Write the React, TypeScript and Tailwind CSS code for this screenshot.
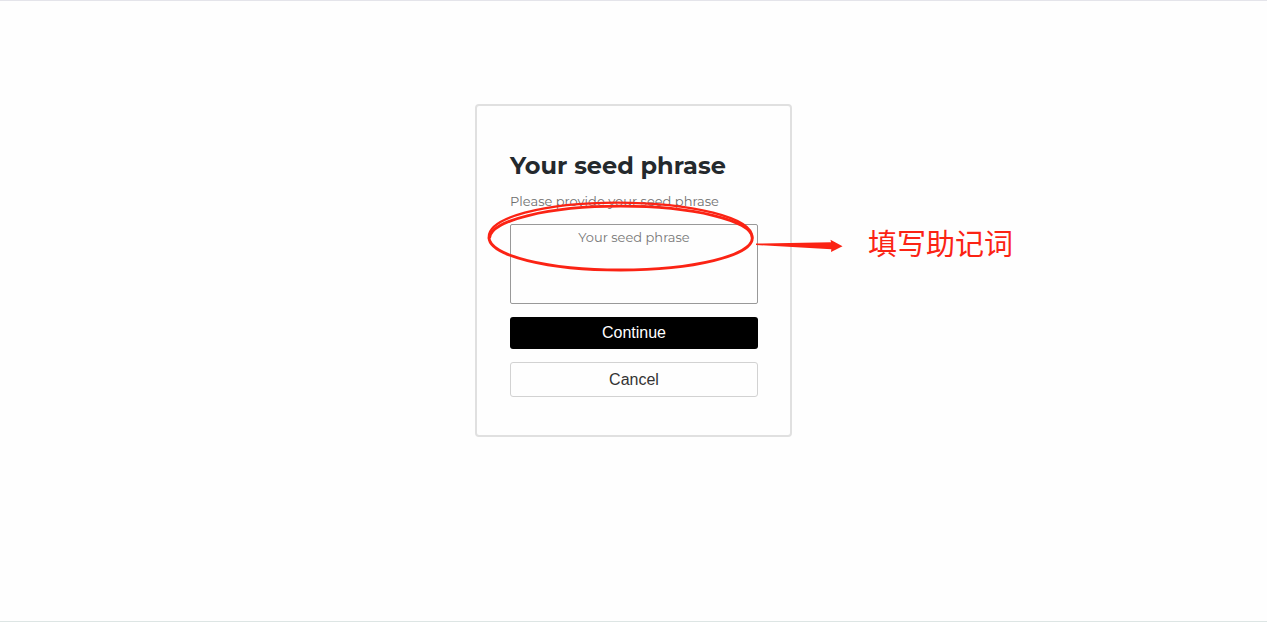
function Annotation() {
  return (
    <div className="pointer-events-none absolute top-[94px] left-[10px] flex items-start">
      <svg className="h-[76px] w-[360px] shrink-0" viewBox="485 198 360 76" fill="none" aria-hidden="true">
        <g stroke="#fb2314">
          <path
            d="M489 237.5 C489 255.6 548 270 620.5 270 C693 270 752.3 255.6 752.3 238 C752.3 220.5 693 206.2 620.5 206.2 C548 206.2 490.5 220.5 489.6 238"
            strokeWidth="2.8"
          />
          <path
            d="M489 238.5 C486 217.5 545 202.6 617 202.6 C690 202.6 755 217.5 752 238.5"
            strokeWidth="2.4"
          />
        </g>
        <path d="M756 243.6 L831 242.3 L830.5 239.8 L842.5 246.2 L831 252 L831.3 249.2 L756 245 Z" fill="#fb2314" />
      </svg>
      <span className="mt-[24px] ml-[23px] font-['Noto_Sans_CJK_SC',sans-serif] text-[29px] leading-[40px] whitespace-nowrap text-[#fb2314]">
        填写助记词
      </span>
    </div>
  );
}

export default function App() {
  return (
    <main className="flex min-h-screen flex-col items-center border-t border-b border-t-[#e4e4ea] border-b-[#dde5e4] bg-[#fefefe] pt-[103px]">
      <div className="relative w-full max-w-[317px]">
        <form
          className="flex flex-col rounded border-2 border-[#e0e0e0] pt-[42px] pr-[32px] pb-[38px] pl-[33px]"
          onSubmit={(event) => event.preventDefault()}
        >
          <h1 className="font-['Montserrat','Inter',sans-serif] text-[24px] leading-[36px] font-bold whitespace-nowrap text-[#24292d]">
            Your seed phrase
          </h1>
          <label
            htmlFor="seed"
            className="mt-[5px] font-['Montserrat','Inter',sans-serif] text-[13px] leading-[24px] whitespace-nowrap text-[#6f6f6f]"
          >
            Please provide your seed phrase
          </label>
          <textarea
            id="seed"
            placeholder="Your seed phrase"
            className="mt-[11px] h-[80px] w-full resize-none rounded-xs border border-[#999999] bg-transparent text-center font-['Montserrat','Inter',sans-serif] text-[13px] leading-[24px] text-[#333333] placeholder:text-[#777777]"
          />
          <button
            type="submit"
            className="mt-[13px] h-[32px] rounded-[3px] bg-black font-['Liberation_Sans',sans-serif] text-[16px] text-white"
          >
            Continue
          </button>
          <button
            type="button"
            className="mt-[13px] h-[35px] rounded-[3px] border border-[#d2d2d2] font-['Liberation_Sans',sans-serif] text-[16px] text-[#333333]"
          >
            Cancel
          </button>
        </form>
        <Annotation />
      </div>
    </main>
  );
}
